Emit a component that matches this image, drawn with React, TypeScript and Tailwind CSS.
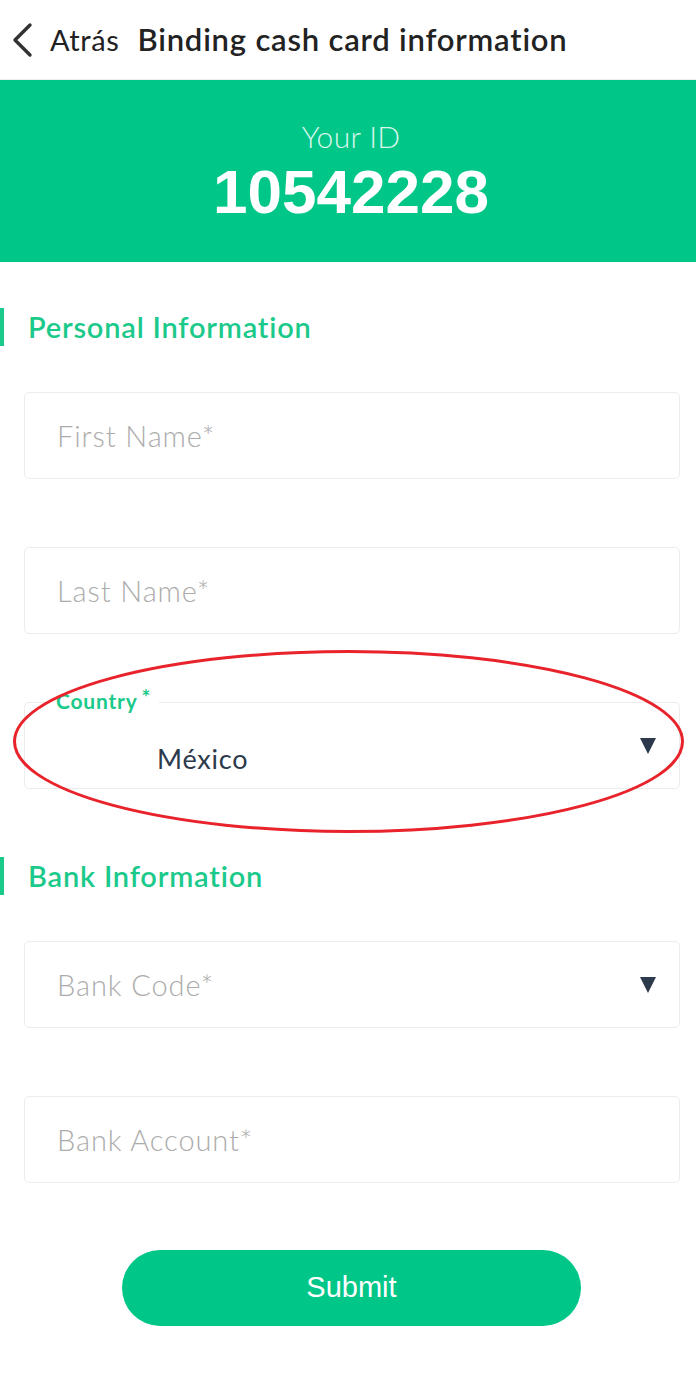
import React from "react";

const font = { fontFamily: "Lato, 'Noto Sans', sans-serif" };

function Triangle() {
  return (
    <svg width="18" height="18" viewBox="0 0 18 18" className="shrink-0">
      <polygon points="1,1 17,1 9,17" fill="#2c3a4b" />
    </svg>
  );
}

function Field({ placeholder, select }: { placeholder: string; select?: boolean }) {
  return (
    <div className="ml-6 mr-4 h-[87px] rounded-[5px] border border-[#ececec] flex items-center pl-8 pr-[22px] justify-between">
      <span className="text-[29px] font-light text-[#acacac] tracking-[0.9px]">{placeholder}</span>
      {select && <Triangle />}
    </div>
  );
}

function Heading({ children }: { children: React.ReactNode }) {
  return (
    <div className="flex items-center h-[38px]">
      <div className="w-[4px] h-[38px] bg-[#1bc98a]" />
      <div className="ml-6 text-[29px] font-semibold text-[#1bc98a] tracking-[0.8px]">{children}</div>
    </div>
  );
}

export default function App() {
  return (
    <div className="w-[696px] h-[1394px] bg-white relative overflow-hidden" style={font}>
      <header className="h-[80px] flex items-center border-b border-[#ececec]">
        <svg width="24" height="36" viewBox="0 0 24 36" className="ml-[10px]">
          <polyline points="20,3 5,18 20,33" fill="none" stroke="#333" strokeWidth="3.4" strokeLinecap="round" strokeLinejoin="round" />
        </svg>
        <span className="ml-[16px] text-[29px] text-[#222] tracking-[0.6px]">Atrás</span>
        <span className="ml-[18px] text-[31px] font-semibold text-[#222] tracking-[0.8px]">Binding cash card information</span>
      </header>
      <section className="h-[182px] bg-[#00c688] flex flex-col items-center pt-[36px] pl-[6px]">
        <div className="text-[30px] font-light text-[#d9f7ec] leading-[40px] tracking-[0.3px]">Your ID</div>
        <div className="text-[62px] font-bold text-white leading-[64px] mt-[4px]" style={{ fontFamily: "'Liberation Sans', Arial, sans-serif" }}>
          10542228
        </div>
      </section>

      <div className="pt-[46px]">
        <Heading>Personal Information</Heading>
        <div className="mt-[46px]">
          <Field placeholder="First Name*" />
        </div>
        <div className="mt-[68px]">
          <Field placeholder="Last Name*" />
        </div>
        <div className="mt-[68px] relative">
          <div className="ml-6 mr-4 h-[87px] rounded-[5px] border border-[#ececec] flex items-center pl-[132px] pr-[22px] justify-between">
            <span className="text-[27px] text-[#2c3a4b] mt-[28px] tracking-[0.8px]">México</span>
            <Triangle />
          </div>
          <div className="absolute left-[48px] top-[-14px] bg-white px-[8px] text-[21px] font-bold text-[#1bc98a] leading-[26px] tracking-[0.8px]">
            Country<span className="ml-[4px] relative top-[-4px]">*</span>
          </div>
        </div>
        <div className="mt-[68px]">
          <Heading>Bank Information</Heading>
        </div>
        <div className="mt-[46px]">
          <Field placeholder="Bank Code*" select />
        </div>
        <div className="mt-[68px]">
          <Field placeholder="Bank Account*" />
        </div>
        <div className="mt-[67px] flex">
          <button
            className="ml-[122px] w-[459px] h-[76px] rounded-full bg-[#00c688] text-white text-[29px]"
            style={{ fontFamily: "'Liberation Sans', Arial, sans-serif" }}
          >
            Submit
          </button>
        </div>
      </div>

      <svg className="absolute left-0 top-0 pointer-events-none" width="696" height="1394">
        <ellipse cx="348.5" cy="741.5" rx="334" ry="90" fill="none" stroke="#e8232b" strokeWidth="3" />
      </svg>
    </div>
  );
}
